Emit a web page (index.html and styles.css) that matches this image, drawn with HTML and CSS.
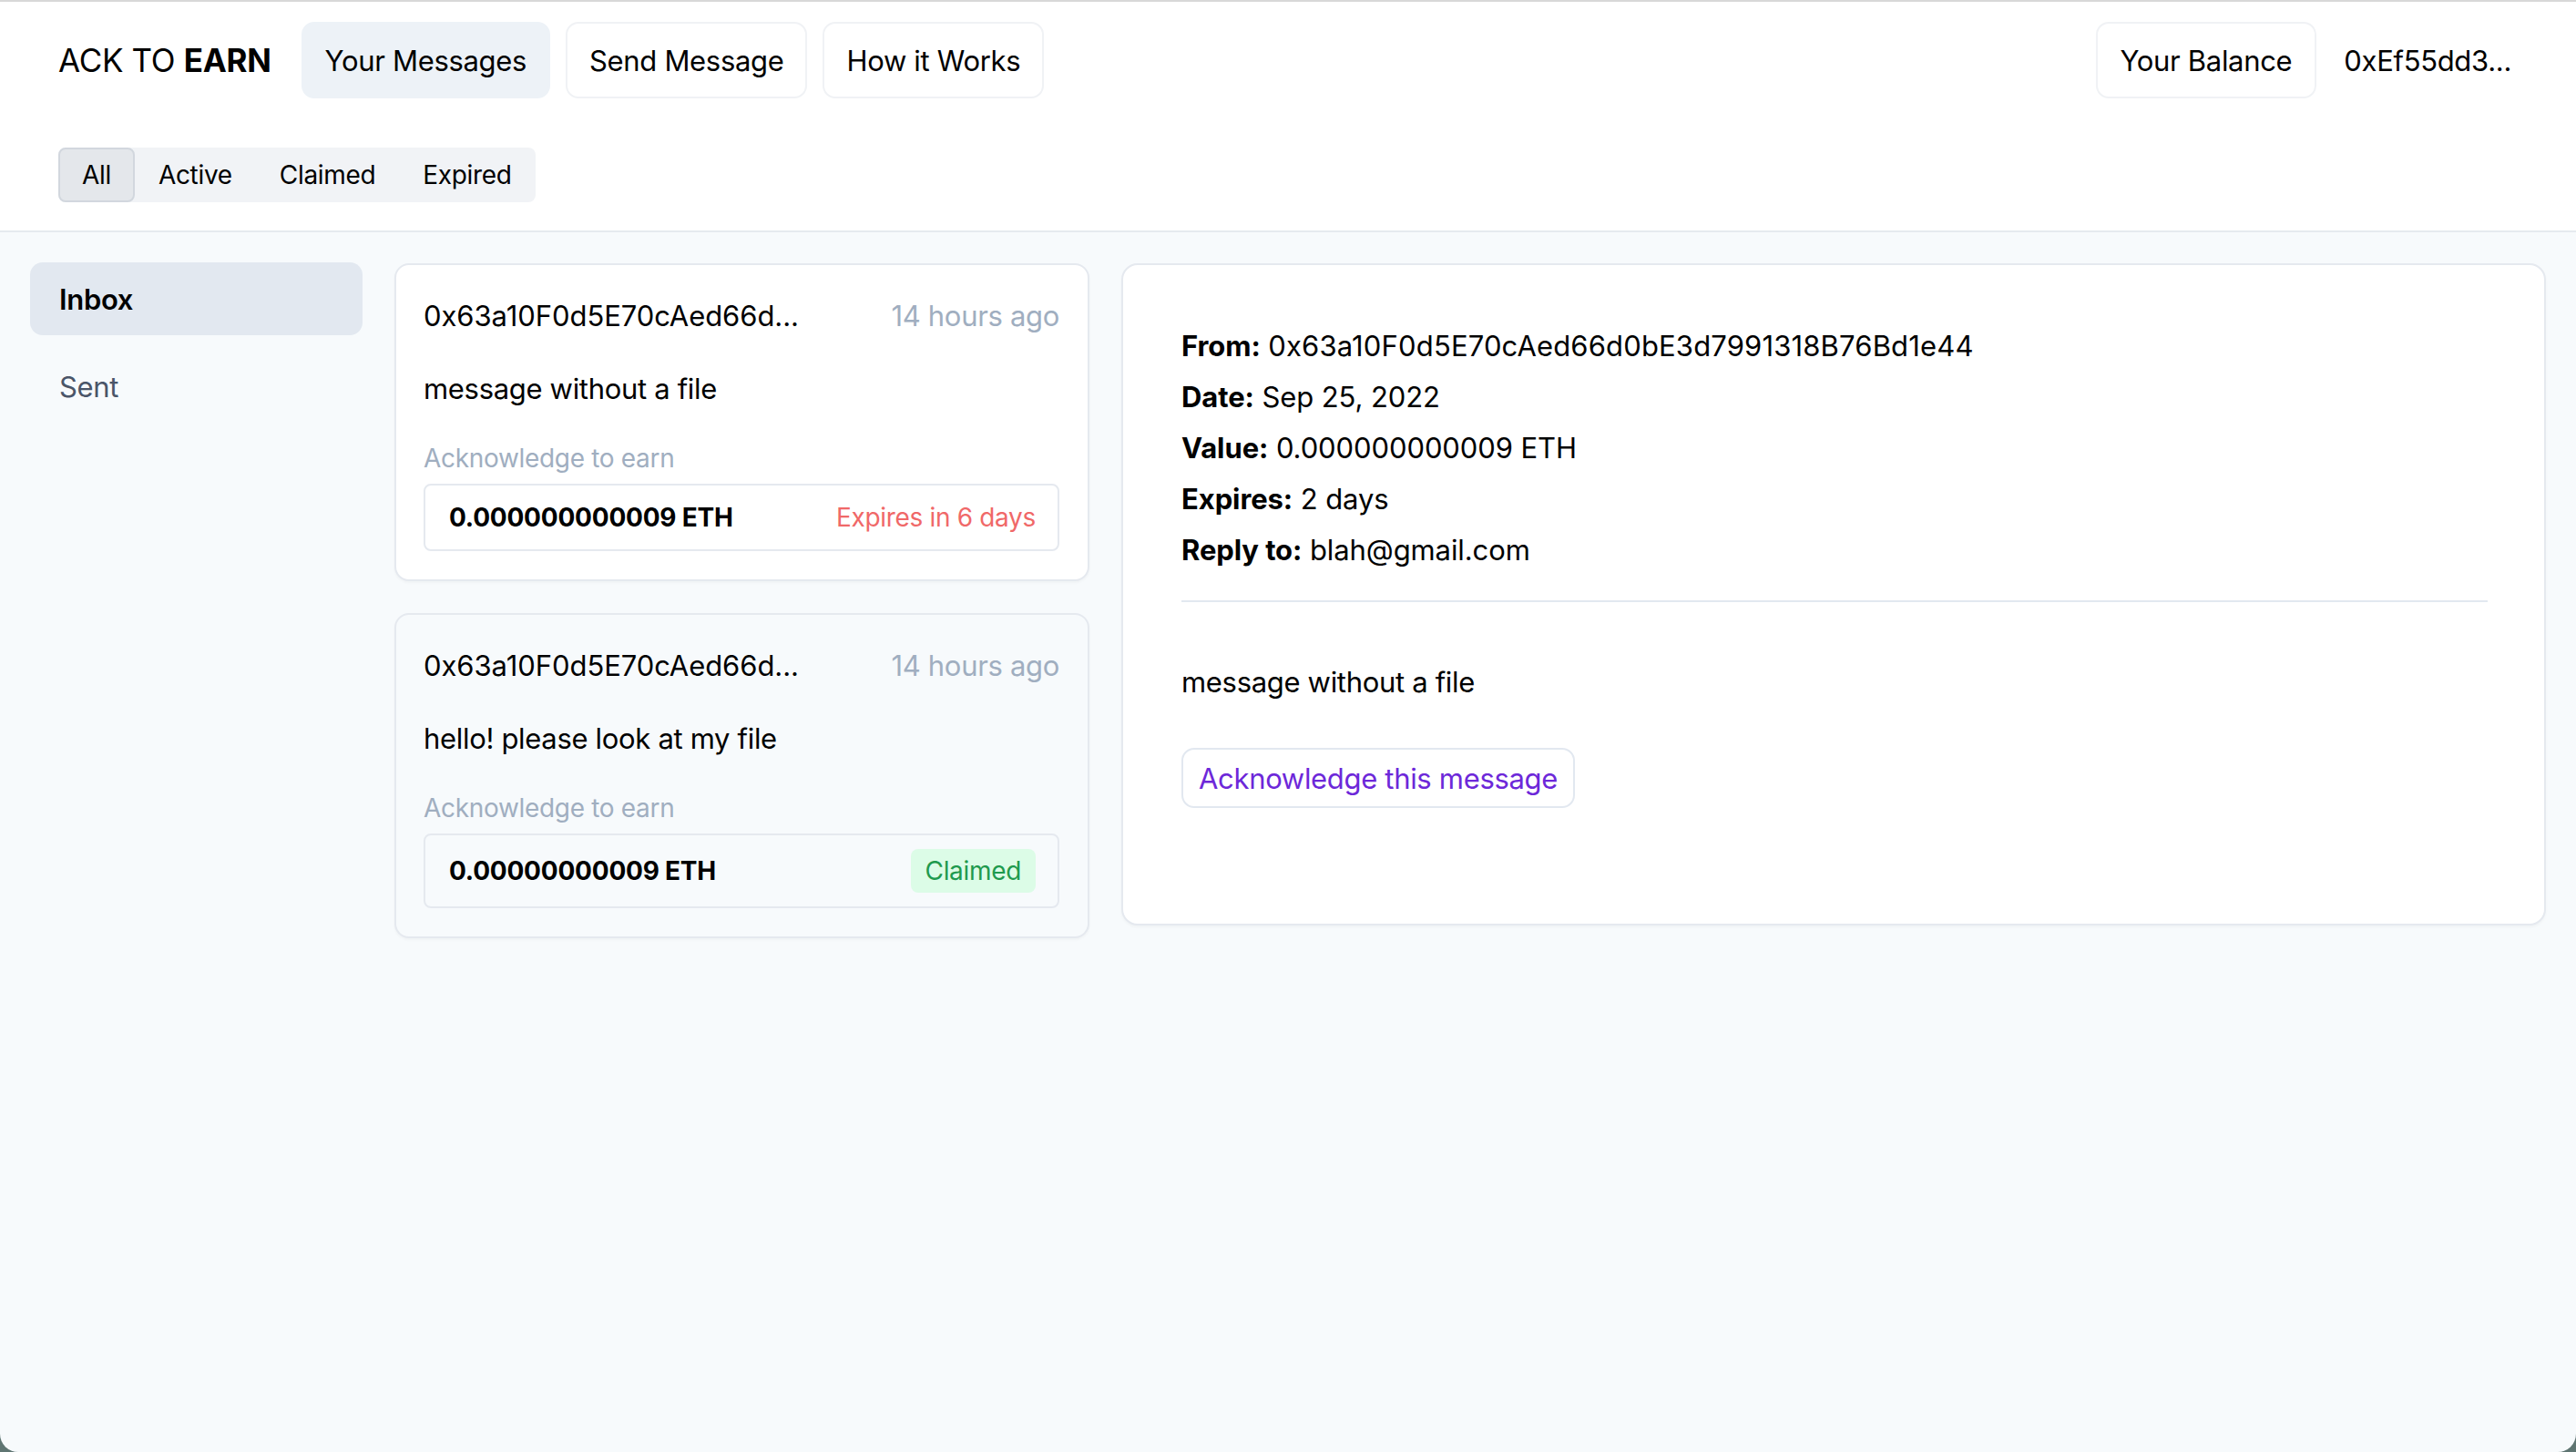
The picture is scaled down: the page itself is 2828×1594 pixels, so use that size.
FILE: index.html
```html
<!DOCTYPE html>
<html lang="en">
<head>
<meta charset="utf-8">
<title>Ack to Earn</title>
<link rel="stylesheet" href="styles.css">
</head>
<body>
<div class="window">
  <header class="topbar">
    <div class="navrow">
      <div class="brand">ACK TO <b>EARN</b></div>
      <nav class="nav">
        <button class="btn btn-active">Your Messages</button>
        <button class="btn btn-outline">Send Message</button>
        <button class="btn btn-outline">How it Works</button>
      </nav>
      <div class="spacer"></div>
      <button class="btn btn-outline balance">Your Balance</button>
      <button class="btn btn-ghost address">0xEf55dd3...</button>
    </div>
    <div class="tabs">
      <button class="tab tab-selected">All</button>
      <button class="tab">Active</button>
      <button class="tab">Claimed</button>
      <button class="tab">Expired</button>
    </div>
  </header>

  <main class="main">
    <aside class="sidebar">
      <div class="side-item side-selected">Inbox</div>
      <div class="side-item side-muted">Sent</div>
    </aside>

    <section class="list">
      <article class="card card-selected">
        <div class="card-head">
          <span class="card-from">0x63a10F0d5E70cAed66d...</span>
          <span class="card-time">14 hours ago</span>
        </div>
        <p class="card-text">message without a file</p>
        <div class="card-label">Acknowledge to earn</div>
        <div class="reward">
          <span class="reward-amount">0.000000000009 ETH</span>
          <span class="reward-expiry">Expires in 6 days</span>
        </div>
      </article>

      <article class="card">
        <div class="card-head">
          <span class="card-from">0x63a10F0d5E70cAed66d...</span>
          <span class="card-time">14 hours ago</span>
        </div>
        <p class="card-text">hello! please look at my file</p>
        <div class="card-label">Acknowledge to earn</div>
        <div class="reward">
          <span class="reward-amount">0.00000000009 ETH</span>
          <span class="badge-claimed">Claimed</span>
        </div>
      </article>
    </section>

    <section class="detail">
      <div class="meta">
        <div class="meta-row"><b>From:</b> <span class="meta-address">0x63a10F0d5E70cAed66d0bE3d7991318B76Bd1e44</span></div>
        <div class="meta-row"><b>Date:</b> Sep 25, 2022</div>
        <div class="meta-row"><b>Value:</b> 0.000000000009 ETH</div>
        <div class="meta-row"><b>Expires:</b> 2 days</div>
        <div class="meta-row"><b>Reply to:</b> blah@gmail.com</div>
      </div>
      <hr class="divider">
      <p class="detail-body">message without a file</p>
      <button class="btn-ack">Acknowledge this message</button>
    </section>
  </main>
</div>
</body>
</html>
```

FILE: styles.css
```css
* {
  box-sizing: border-box;
}

html {
  background: #5f7572;
}

body {
  margin: 0;
  font-family: "Inter", "Roboto", "Liberation Sans", sans-serif;
  letter-spacing: -0.02em;
  color: #000;
}

.window {
  height: 1594px;
  background: #f7fafc;
  border-top: 2px solid #d8d8d8;
  border-radius: 0 0 20px 20px;
  overflow: hidden;
  display: flex;
  flex-direction: column;
}

button {
  font-family: inherit;
  letter-spacing: inherit;
  color: inherit;
  cursor: pointer;
}

/* ---------- header ---------- */
.topbar {
  background: #fff;
  border-bottom: 2px solid #e6eaef;
  padding: 22px 44px 31px 64px;
}

.navrow {
  display: flex;
  align-items: center;
  height: 84px;
}

.brand {
  font-size: 35px;
  margin-right: 33px;
  white-space: nowrap;
}

.brand b {
  font-weight: 700;
}

.nav {
  display: flex;
  gap: 17px;
}

.spacer {
  flex: 1;
}

.btn {
  height: 84px;
  padding: 0 24px;
  font-size: 31px;
  border-radius: 14px;
  border: 2px solid #f0f2f5;
  background: #fff;
  white-space: nowrap;
}

.balance,
.address {
  padding: 0 25px;
}

.btn-active {
  background: #edf2f7;
  border-color: #edf2f7;
}

.btn-ghost {
  border-color: transparent;
  background: transparent;
}

.address {
  margin-left: 3px;
}

.tabs {
  margin-top: 54px;
  display: inline-flex;
  height: 60px;
  background: #f1f3f6;
  border-radius: 8px;
}

.tab {
  font-size: 28px;
  padding: 0 24px;
  border: 2px solid transparent;
  background: transparent;
  border-radius: 8px;
}

.tab-selected {
  background: #e4e7eb;
  border-color: #d2d7de;
}

/* ---------- main ---------- */
.main {
  flex: 1;
  display: flex;
  align-items: flex-start;
  padding: 32px 33px 0 33px;
  gap: 35px;
}

.sidebar {
  width: 365px;
  margin-top: 1px;
  display: flex;
  flex-direction: column;
  gap: 16px;
}

.side-item {
  height: 80px;
  display: flex;
  align-items: center;
  padding-left: 32px;
  font-size: 31px;
  border-radius: 14px;
}

.side-selected {
  background: #e2e8f0;
  font-weight: 600;
  color: #000;
}

.side-muted {
  color: #4a5568;
}

.list {
  width: 763px;
  display: flex;
  flex-direction: column;
  gap: 35px;
  margin-top: 2px;
}

.card {
  background: #f7fafc;
  border: 2px solid #e5e9ef;
  border-radius: 16px;
  padding: 32px 31px 31px 30px;
  box-shadow: 0 2px 3px rgba(0, 0, 0, 0.03);
}

.card-selected {
  background: #fff;
}

.card-head {
  display: flex;
  justify-content: space-between;
  font-size: 31px;
  line-height: 48px;
}

.card-from {
  letter-spacing: -0.002em;
}

.card-time {
  color: #a0aec0;
}

.card-text {
  margin: 32px 0 0;
  font-size: 31px;
  line-height: 48px;
}

.card-label {
  margin-top: 31px;
  font-size: 28px;
  line-height: 42px;
  color: #a0aec0;
}

.reward {
  margin-top: 7px;
  border: 2px solid #e5e9ef;
  border-radius: 8px;
  padding: 15px 24px 15px 26px;
  display: flex;
  justify-content: space-between;
  align-items: center;
  font-size: 28px;
  line-height: 40px;
}

.reward-amount {
  font-weight: 700;
  letter-spacing: -0.008em;
}

.reward-expiry {
  color: #f06868;
}

.badge-claimed {
  background: #dcfce7;
  color: #1f9a4e;
  height: 48px;
  line-height: 48px;
  padding: 0 16px;
  border-radius: 8px;
}

.detail {
  flex: 1;
  margin-top: 2px;
  background: #fff;
  border: 2px solid #e5e9ef;
  border-radius: 18px;
  padding: 61px 62px 127px 64px;
  box-shadow: 0 2px 3px rgba(0, 0, 0, 0.03);
}

.meta-row {
  font-size: 31px;
  line-height: 56px;
  letter-spacing: -0.003em;
}

.meta-row b {
  font-weight: 700;
}

.meta-address {
  letter-spacing: 0.005em;
}

.divider {
  margin: 27px 0 0;
  border: 0;
  border-top: 2px solid #e2e8f0;
}

.detail-body {
  margin: 60px 0 0;
  font-size: 31px;
  line-height: 56px;
}

.btn-ack {
  margin-top: 44px;
  height: 66px;
  padding: 0 17px;
  font-size: 31px;
  color: #6d28d9;
  background: #fff;
  border: 2px solid #e2e8f0;
  border-radius: 14px;
}
```
